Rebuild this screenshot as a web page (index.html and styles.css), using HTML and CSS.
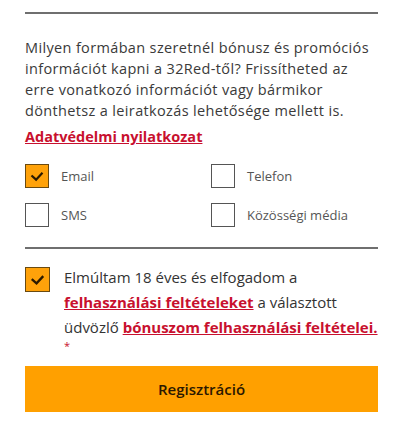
FILE: index.html
```html
<!DOCTYPE html>
<html lang="hu">
<head>
  <meta charset="utf-8">
  <title>Regisztráció</title>
  <link rel="stylesheet" href="styles.css">
</head>
<body>
  <div class="form">
    <div class="rule"></div>

    <p class="intro">Milyen formában szeretnél bónusz és promóciós információt kapni a 32Red-től? Frissítheted az erre vonatkozó információt vagy bármikor dönthetsz a leiratkozás lehetősége mellett is.</p>
    <a class="link privacy" href="#">Adatvédelmi nyilatkozat</a>

    <!-- kommunikációs csatornák -->
    <div class="channels">
      <label class="opt"><span class="box checked"><svg viewBox="0 0 24 24"><path d="M6 11.5l5 4.5 7-7.5"/></svg></span>Email</label>
      <label class="opt"><span class="box"></span>Telefon</label>
      <label class="opt"><span class="box"></span>SMS</label>
      <label class="opt"><span class="box"></span>Közösségi média</label>
    </div>

    <div class="rule"></div>

    <div class="terms">
      <span class="box big checked"><svg viewBox="0 0 24 24"><path d="M6 11.5l5 4.5 7-7.5"/></svg></span>
      <div class="terms-text">
        <p>Elmúltam 18 éves és elfogadom a <a class="link" href="#">felhasználási feltételeket</a> a választott üdvözlő <a class="link" href="#">bónuszom felhasználási feltételei.</a></p>
        <span class="req">*</span>
      </div>
    </div>

    <button class="btn">Regisztráció</button>
  </div>
</body>
</html>
```

FILE: styles.css
```css
* { margin: 0; padding: 0; box-sizing: border-box; }
body {
  font-family: "Open Sans", "DejaVu Sans", sans-serif;
  color: #333;
  background: #fff;
}
.form {
  padding: 12px 22px 0 25px;
}
.rule {
  height: 2px;
  background: #6f6f6f;
}
.intro {
  margin-top: 23px;
  font-size: 14.5px;
  line-height: 21px;
  letter-spacing: 0.35px;
  color: #3a3a3a;
}
.link {
  color: #c8102e;
  font-weight: 700;
  text-decoration: underline;
}
.privacy {
  display: block;
  margin-top: 5px;
  font-size: 14.5px;
  line-height: 21px;
}
/* jelölőnégyzetek */
.channels {
  display: grid;
  grid-template-columns: 186px 1fr;
  row-gap: 15px;
  margin: 17px 0 20px;
}
.opt {
  display: flex;
  align-items: center;
  gap: 12px;
  font-size: 13px;
  color: #555;
}
.box {
  width: 24px;
  height: 24px;
  border: 1px solid #555;
  background: #fff;
  flex: none;
}
.box svg { width: 100%; height: 100%; display: block; }
.box path { fill: none; stroke: #2b1a00; stroke-width: 2.4; }
.box.checked { background: #ffa20a; border-color: #6a4a10; }
.box.big { width: 25px; height: 25px; }
.terms {
  display: flex;
  gap: 14px;
  margin-top: 16px;
}
.terms .box { margin-top: 2px; }
.terms p {
  font-size: 15px;
  line-height: 25px;
  color: #333;
}
.req {
  display: block;
  color: #c8102e;
  font-size: 11px;
  line-height: 12px;
}
.btn {
  display: block;
  width: 100%;
  height: 46px;
  margin-top: 14px;
  border: none;
  background: #ffa000;
  color: #2b1800;
  font-family: inherit;
  font-size: 15px;
  font-weight: 600;
}
```
